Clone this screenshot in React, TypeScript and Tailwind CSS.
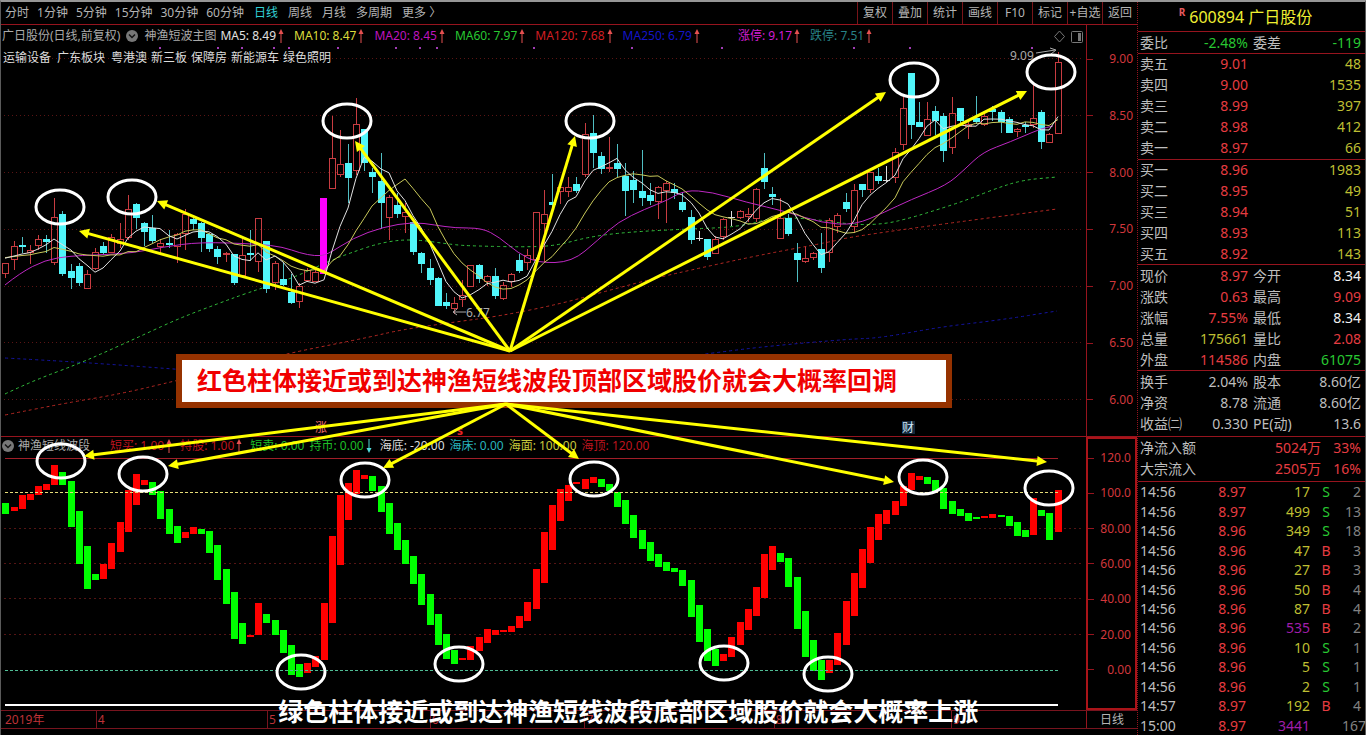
import clsx from "clsx";

type Kind = "u" | "d" | "w";
type Point = [number, number];

const FONT = "font-['Noto_Sans','Noto_Sans_CJK_SC',sans-serif]";

const MINUTES = ["分时", "1分钟", "5分钟", "15分钟", "30分钟", "60分钟"];
const PERIODS = ["日线", "周线", "月线", "多周期", "更多 〉"];
const TOOLS = ["复权", "叠加", "统计", "画线", "F10", "标记", "+自选", "返回"];

// kind, high, body top, body bottom, low
const CANDLES: [Kind, number, number, number, number][] = [
    ["u", 263, 263, 274, 278], ["u", 241, 246, 260, 270], ["d", 237, 245, 247, 253], ["u", 245, 250, 253, 264],
    ["u", 235, 239, 246, 250], ["d", 235, 239, 242, 253], ["u", 198, 217, 263, 265], ["d", 211, 214, 274, 276],
    ["d", 264, 271, 278, 289], ["d", 263, 266, 283, 286], ["u", 270, 274, 289, 289], ["u", 248, 252, 269, 270],
    ["d", 242, 246, 253, 255], ["u", 234, 237, 253, 253], ["u", 223, 239, 244, 248], ["u", 195, 209, 238, 240],
    ["d", 203, 204, 218, 229], ["d", 222, 223, 232, 246], ["d", 215, 228, 241, 243], ["u", 239, 243, 247, 253],
    ["d", 230, 243, 245, 248], ["u", 233, 234, 247, 263], ["u", 209, 214, 234, 250], ["d", 215, 219, 224, 230],
    ["d", 222, 223, 238, 252], ["d", 233, 234, 249, 252], ["d", 246, 249, 257, 264], ["u", 252, 253, 255, 262],
    ["d", 254, 254, 283, 285], ["u", 238, 255, 276, 276], ["d", 230, 253, 255, 261], ["u", 218, 218, 262, 272],
    ["d", 241, 241, 289, 293], ["u", 261, 263, 283, 290], ["d", 263, 279, 285, 286], ["d", 274, 292, 303, 304],
    ["u", 283, 286, 302, 308], ["u", 268, 270, 281, 281], ["u", 270, 272, 282, 282], ["u", 262, 268, 276, 278],
    ["u", 116, 158, 189, 189], ["u", 130, 164, 175, 177], ["d", 144, 163, 178, 203], ["u", 98, 124, 171, 175],
    ["d", 129, 129, 163, 171], ["d", 168, 172, 177, 193], ["d", 153, 181, 203, 229], ["u", 195, 197, 218, 240],
    ["d", 193, 205, 214, 218], ["u", 203, 212, 217, 233], ["d", 220, 222, 252, 255], ["d", 252, 253, 264, 273],
    ["d", 259, 268, 280, 285], ["d", 277, 278, 306, 306], ["d", 293, 302, 306, 309], ["u", 297, 303, 309, 314],
    ["u", 280, 295, 300, 307], ["u", 265, 265, 287, 287], ["d", 264, 265, 279, 283], ["u", 275, 276, 282, 286],
    ["d", 268, 276, 296, 299], ["u", 282, 285, 299, 300], ["u", 273, 274, 282, 287], ["d", 254, 260, 271, 273],
    ["u", 249, 255, 263, 270], ["u", 212, 212, 260, 260], ["u", 190, 214, 224, 262], ["d", 174, 202, 205, 213],
    ["u", 182, 187, 192, 204], ["u", 177, 187, 192, 197], ["d", 177, 184, 191, 193], ["u", 123, 134, 175, 177],
    ["d", 115, 133, 153, 168], ["d", 152, 156, 169, 174], ["u", 137, 167, 169, 172], ["d", 144, 163, 169, 177],
    ["d", 163, 176, 191, 216], ["d", 171, 180, 190, 203], ["d", 150, 191, 198, 206], ["d", 183, 195, 201, 205],
    ["u", 186, 187, 202, 219], ["u", 181, 183, 191, 223], ["d", 183, 189, 193, 199], ["d", 192, 202, 210, 212],
    ["d", 210, 217, 240, 244], ["w", 231, 238, 239, 241], ["d", 239, 239, 257, 260], ["u", 236, 239, 254, 254],
    ["u", 218, 219, 237, 240], ["w", 211, 217, 218, 226], ["u", 210, 211, 218, 219], ["u", 208, 214, 217, 222],
    ["u", 188, 189, 219, 222], ["d", 153, 168, 182, 189], ["d", 187, 194, 197, 205], ["u", 198, 218, 239, 239],
    ["d", 214, 218, 234, 236], ["d", 243, 253, 260, 282], ["u", 247, 258, 262, 263], ["u", 252, 253, 258, 260],
    ["d", 233, 249, 268, 273], ["u", 218, 220, 253, 262], ["u", 213, 215, 227, 233], ["d", 193, 202, 209, 212],
    ["u", 184, 190, 227, 233], ["d", 184, 184, 190, 197], ["u", 172, 172, 190, 193], ["d", 168, 176, 181, 184],
    ["w", 166, 180, 181, 182], ["u", 148, 152, 178, 183], ["u", 97, 108, 145, 150], ["d", 73, 73, 125, 139],
    ["d", 102, 122, 127, 127], ["u", 102, 119, 136, 136], ["d", 106, 111, 121, 135], ["d", 113, 116, 151, 162],
    ["u", 97, 113, 148, 154], ["d", 108, 108, 121, 124], ["u", 120, 124, 127, 139], ["d", 96, 118, 122, 124],
    ["u", 113, 116, 125, 126], ["d", 106, 109, 112, 121], ["d", 110, 112, 122, 133], ["d", 117, 119, 133, 133],
    ["u", 128, 129, 132, 137], ["d", 122, 125, 127, 133], ["u", 85, 118, 125, 128], ["d", 110, 112, 142, 149],
    ["u", 133, 134, 143, 143], ["u", 52, 62, 134, 134],
];

// kind, top, bottom
const WAVE: [Kind, number, number][] = [
    ["d", 503, 514], ["u", 507, 511], ["u", 495, 509], ["u", 494, 500], ["u", 486, 495], ["u", 484, 490],
    ["u", 465, 485], ["d", 472, 485], ["d", 481, 527], ["d", 511, 564], ["d", 546, 589], ["d", 574, 580],
    ["u", 564, 579], ["u", 543, 569], ["u", 522, 552], ["u", 490, 532], ["u", 474, 505], ["u", 480, 485],
    ["d", 482, 495], ["d", 491, 519], ["d", 509, 534], ["d", 526, 543], ["u", 532, 538], ["u", 527, 534],
    ["d", 529, 534], ["d", 531, 553], ["d", 545, 580], ["d", 569, 604], ["d", 592, 639], ["d", 623, 644],
    ["u", 635, 637], ["u", 603, 635], ["d", 614, 623], ["d", 620, 635], ["d", 630, 653], ["d", 645, 675],
    ["d", 664, 677], ["u", 663, 673], ["u", 656, 667], ["u", 603, 660], ["u", 536, 623], ["u", 495, 565],
    ["u", 483, 520], ["u", 470, 494], ["u", 475, 479], ["d", 476, 491], ["d", 486, 512], ["d", 503, 534],
    ["d", 523, 550], ["d", 540, 564], ["d", 556, 584], ["d", 574, 605], ["d", 594, 625], ["d", 614, 645],
    ["d", 634, 659], ["d", 650, 664], ["u", 658, 660], ["u", 646, 660], ["u", 637, 651], ["u", 629, 643],
    ["u", 630, 635], ["u", 630, 632], ["u", 626, 632], ["u", 616, 628], ["u", 602, 621], ["u", 569, 609],
    ["u", 532, 583], ["u", 505, 550], ["u", 489, 521], ["u", 485, 501], ["u", 482, 484], ["u", 479, 489],
    ["u", 477, 483], ["d", 479, 487], ["d", 484, 491], ["d", 492, 507], ["d", 500, 524], ["d", 515, 538],
    ["d", 530, 549], ["d", 542, 561], ["d", 554, 567], ["d", 562, 571], ["d", 568, 572], ["d", 570, 586],
    ["d", 580, 617], ["d", 605, 642], ["d", 629, 661], ["d", 649, 666], ["u", 654, 661], ["u", 637, 657],
    ["u", 622, 645], ["u", 609, 630], ["u", 587, 616], ["u", 554, 598], ["u", 546, 570], ["d", 553, 562],
    ["d", 558, 587], ["d", 577, 629], ["d", 611, 657], ["d", 640, 671], ["d", 660, 680], ["u", 660, 673],
    ["u", 633, 665], ["u", 601, 645], ["u", 573, 616], ["u", 549, 588], ["u", 527, 563], ["u", 514, 540],
    ["u", 510, 524], ["u", 501, 515], ["u", 486, 506], ["u", 473, 490], ["u", 476, 480], ["d", 477, 484],
    ["d", 480, 491], ["d", 488, 509], ["d", 501, 514], ["d", 509, 516], ["d", 513, 521], ["d", 517, 519],
    ["u", 516, 518], ["u", 514, 518], ["d", 515, 517], ["d", 516, 526], ["d", 522, 536], ["d", 530, 537],
    ["u", 498, 535], ["d", 510, 516], ["d", 513, 540], ["u", 490, 532],
];

const MA20: Point[] = [
    [5, 285], [20, 273], [45, 260], [70, 256], [95, 255], [133, 253], [163, 247], [200, 242], [258, 244], [283, 247],
    [300, 253], [315, 256], [327, 255], [353, 238], [383, 227], [413, 222], [435, 225], [455, 228], [482, 228],
    [499, 237], [518, 253], [538, 263], [572, 262], [598, 240], [618, 222], [645, 209], [668, 200], [685, 190],
    [712, 192], [745, 202], [788, 212], [822, 223], [855, 225], [885, 212], [910, 200], [947, 185], [965, 169],
    [983, 152], [1010, 142], [1040, 129], [1053, 126],
];
const MA60: Point[] = [
    [5, 394], [30, 382], [78, 364], [110, 350], [143, 335], [180, 318], [217, 304], [247, 293], [293, 278], [327, 262],
    [350, 253], [383, 242], [413, 239], [455, 245], [475, 246], [522, 247], [555, 246], [588, 237], [628, 232],
    [688, 229], [738, 227], [772, 218], [805, 218], [855, 225], [885, 224], [910, 218], [930, 212], [967, 200],
    [997, 188], [1023, 180], [1057, 177],
];
const MA120: Point[] = [
    [5, 415], [60, 404], [120, 394], [175, 381], [290, 353], [330, 345], [370, 337], [400, 330], [455, 322],
    [500, 316], [560, 304], [610, 290], [660, 277], [700, 268], [760, 255], [830, 242], [850, 237], [950, 223],
    [1057, 209],
];
const MA250: Point[] = [
    [5, 358], [60, 361], [120, 365], [200, 371], [300, 377], [450, 379], [600, 368], [720, 352], [770, 346],
    [850, 339], [880, 338], [940, 327], [1000, 320], [1057, 311],
];

const SIGNAL_DOTS = [160, 218, 242, 274, 289, 338, 396, 420, 437, 534, 632, 722, 854, 910, 1032];

const RINGS: Point[] = [
    [60, 207], [132, 197], [347, 121], [590, 121], [914, 80], [1051, 72],
    [61, 461], [143, 474], [365, 480], [594, 479], [923, 477], [1049, 488],
    [301, 672], [459, 664], [724, 663], [828, 674],
];
const UPPER_TARGETS: Point[] = [[79, 231], [157, 201], [355, 141], [575, 136], [886, 92], [1027, 91]];
const LOWER_TARGETS: Point[] = [[84, 456], [168, 466], [383, 468], [579, 459], [894, 482], [1047, 462]];

const MAIN_LEGEND = [
    { text: "MA5: 8.49", color: "text-[#e0e0e0]" },
    { text: "MA10: 8.47", color: "text-[#dcdc3c]" },
    { text: "MA20: 8.45", color: "text-[#be14be]" },
    { text: "MA60: 7.97", color: "text-[#28c832]" },
    { text: "MA120: 7.68", color: "text-[#d21e23]" },
    { text: "MA250: 6.79", color: "text-[#1414c8]" },
    { text: "涨停: 9.17", color: "text-[#d21ed2]", push: true },
    { text: "跌停: 7.51", color: "text-[#288287]" },
];

const SUB_LEGEND = [
    { text: "短买: 1.00", color: "text-[#be141e]", arrow: "up" },
    { text: "持股: 1.00", color: "text-[#be141e]", arrow: "up" },
    { text: "短卖: 0.00", color: "text-[#1ebe28]" },
    { text: "持币: 0.00", color: "text-[#1ebe28]", arrow: "down" },
    { text: "海底: -20.00", color: "text-[#dcdcdc]" },
    { text: "海床: 0.00", color: "text-[#28b4be]" },
    { text: "海面: 100.00", color: "text-[#c8c83c]" },
    { text: "海顶: 120.00", color: "text-[#be141e]" },
];

const PRICE_SCALE = ["9.00", "8.50", "8.00", "7.50", "7.00", "6.50", "6.00"];
const WAVE_SCALE = ["120.0", "100.0", "80.00", "60.00", "40.00", "20.00", "0.00"];

const MONTHS = [
    { label: "2019年", span: 92 },
    { label: "4", span: 172 },
    { label: "5", span: 163 },
    { label: "6", span: 155 },
    { label: "7", span: 190 },
    { label: "8", span: 178 },
    { label: "9", span: 135 },
];

const ASKS = [["卖五", "9.01", "48"], ["卖四", "9.00", "1535"], ["卖三", "8.99", "397"], ["卖二", "8.98", "412"], ["卖一", "8.97", "66"]];
const BIDS = [["买一", "8.96", "1983"], ["买二", "8.95", "49"], ["买三", "8.94", "51"], ["买四", "8.93", "113"], ["买五", "8.92", "143"]];

const RED = "text-[#e63c41]";
const GREEN = "text-[#28c832]";
const YELLOW = "text-[#bebe32]";
const WHITE = "text-[#f0f0f0]";
const GRAY = "text-[#bebebe]";

const QUOTE = [
    ["现价", "8.97", RED, "今开", "8.34", WHITE],
    ["涨跌", "0.63", RED, "最高", "9.09", RED],
    ["涨幅", "7.55%", RED, "最低", "8.34", WHITE],
    ["总量", "175661", YELLOW, "量比", "2.08", RED],
    ["外盘", "114586", RED, "内盘", "61075", GREEN],
];
const FUNDAMENTALS = [
    ["换手", "2.04%", GRAY, "股本", "8.60亿", GRAY],
    ["净资", "8.78", GRAY, "流通", "8.60亿", GRAY],
    ["收益㈡", "0.330", GRAY, "PE(动)", "13.6", GRAY],
];
const FLOWS = [["净流入额", "5024万", "33%"], ["大宗流入", "2505万", "16%"]];
const TICKS = [
    ["14:56", "8.97", "17", "S", "2"],
    ["14:56", "8.97", "499", "S", "13"],
    ["14:56", "8.96", "349", "S", "18"],
    ["14:56", "8.96", "47", "B", "3"],
    ["14:56", "8.96", "27", "B", "3"],
    ["14:56", "8.96", "50", "B", "4"],
    ["14:56", "8.96", "87", "B", "4"],
    ["14:56", "8.96", "535", "B", "2"],
    ["14:56", "8.96", "10", "S", "1"],
    ["14:56", "8.96", "5", "S", "1"],
    ["14:56", "8.96", "2", "S", "1"],
    ["14:57", "8.97", "192", "B", "4"],
    ["15:00", "8.97", "3441", "", "167"],
];

const barX = (i: number) => Math.round(5.4 + i * 8.157);
const toPath = (points: Point[]) => points.map(([x, y], i) => `${i ? "L" : "M"}${x} ${y.toFixed(1)}`).join("");

// quadratic midpoints keep the long averages smooth
function toCurve(points: Point[]) {
    let d = `M${points[0][0]} ${points[0][1]}`;
    for (let i = 1; i < points.length - 1; i++) {
        const [x, y] = points[i];
        const [nx, ny] = points[i + 1];
        d += `Q${x} ${y} ${(x + nx) / 2} ${(y + ny) / 2}`;
    }
    const last = points[points.length - 1];
    return `${d}L${last[0]} ${last[1]}`;
}

function movingAverage(size: number): Point[] {
    const closes = CANDLES.map(([kind, , top, bottom]) => (kind === "u" ? top : bottom));
    return closes.map((_, i) => {
        let sum = 0;
        for (let k = i - size + 1; k <= i; k++) sum += k < 0 ? 257 : closes[k];
        return [barX(i), sum / size];
    });
}

function Trend({ down }: { down?: boolean }) {
    return (
        <svg viewBox="0 0 8 16" className={clsx("w-2 h-4 shrink-0", down && "rotate-180")} aria-hidden="true">
            <path d="M4 15V3" stroke={down ? "#50dcdc" : "#e65050"} strokeWidth="1" />
            <path d="M4 1L6.5 6H1.5Z" fill={down ? "#50dcdc" : "#e65050"} />
        </svg>
    );
}

function Toggle({ label }: { label: string }) {
    return (
        <button type="button" aria-label={label} className="shrink-0">
            <svg viewBox="0 0 12 12" className="w-3 h-3">
                <circle cx="6" cy="6" r="6" fill="#787878" />
                <path d="M3 4.5L6 7.5L9 4.5" fill="none" stroke="#141414" strokeWidth="1.5" />
            </svg>
        </button>
    );
}

function Toolbar() {
    return (
        <nav className="flex h-[23px] items-stretch border-b border-[#96141e] text-xs text-[#b4b4b4]">
            <div className="flex items-center gap-2 pl-1">
                {MINUTES.map((label) => (
                    <button key={label} type="button" className="whitespace-nowrap">{label}</button>
                ))}
            </div>
            <div className="flex items-center gap-2.5 pl-2.5">
                {PERIODS.map((label) => (
                    <button
                        key={label}
                        type="button"
                        className={clsx("whitespace-nowrap", label === "日线" && "text-[#32d2d7]")}
                    >
                        {label}
                    </button>
                ))}
            </div>
            <div className="ml-auto flex">
                {TOOLS.map((label) => (
                    <button key={label} type="button" className="w-[35px] whitespace-nowrap border-l border-[#781419]">
                        {label}
                    </button>
                ))}
            </div>
        </nav>
    );
}

function CandleChart() {
    return (
        <svg viewBox="1 25 1085 411" className="block w-full" role="img" aria-label="日线K线图">
            {[59, 116, 173, 230, 287, 343, 400].map((y) => (
                <path key={y} d={`M4 ${y - 0.5}H1083`} stroke="#5a1414" strokeDasharray="1 3" />
            ))}
            {SIGNAL_DOTS.map((x) => (
                <rect key={x} x={x - 1} y="47" width="2" height="2" fill="#a03cb4" />
            ))}
            <g fill="none">
                <path d={toCurve(MA250)} stroke="#1414a0" strokeDasharray="3 3" />
                <path d={toCurve(MA120)} stroke="#b42823" strokeDasharray="3 3" />
                <path d={toCurve(MA60)} stroke="#32be3c" strokeDasharray="3 3" />
            </g>
            <g shapeRendering="crispEdges">
                {CANDLES.map(([kind, high, top, bottom, low], i) => {
                    const x = barX(i);
                    if (i === 39) return <rect key={i} x={x - 4} y="198" width="7" height="76" fill="#ff00ff" />;
                    if (kind === "u") {
                        return (
                            <path
                                key={i}
                                d={`M${x + 0.5} ${high}V${top}M${x + 0.5} ${bottom}V${low}M${x - 2.5} ${top + 0.5}h6V${bottom - 0.5}h-6Z`}
                                fill="none"
                                stroke="#c83c41"
                            />
                        );
                    }
                    return (
                        <g key={i} fill={kind === "d" ? "#50f5fa" : "#dcdcdc"}>
                            <rect x={x} y={high} width="1" height={low - high} fill={kind === "d" ? "#50bec3" : "#dcdcdc"} />
                            <rect x={x - 3} y={top} width="7" height={bottom - top} />
                        </g>
                    );
                })}
            </g>
            <g fill="none">
                <path d={toCurve(MA20)} stroke="#be28c3" />
                <path d={toPath(movingAverage(10))} stroke="#c8c85a" />
                <path d={toPath(movingAverage(5))} stroke="#e1e1e1" />
            </g>
            <g fill="#aaaaaa" fontSize="12">
                <text x="1010" y="60">9.09</text>
                <path d="M1036 53L1055 50M1050 48L1056 50L1051 54" fill="none" stroke="#aaaaaa" />
                <text x="466" y="317">6.77</text>
                <path d="M453 312H466M457 309L453 312L457 315" fill="none" stroke="#aaaaaa" />
            </g>
            <g fontSize="12" textAnchor="middle">
                <text x="321" y="432" fill="#f06e6e">涨</text>
                <text x="460" y="435" fill="#e62323" fontWeight="bold">s</text>
                <rect x="902" y="421" width="13" height="13" fill="#14283c" />
                <text x="908" y="432" fill="#d2e6fa">财</text>
            </g>
        </svg>
    );
}

function WaveChart() {
    return (
        <svg viewBox="1 437 1085 273" className="block w-full" role="img" aria-label="神渔短线波段">
            {[529, 564, 599, 635].map((y) => (
                <path key={y} d={`M4 ${y - 0.5}H1083`} stroke="#551414" strokeDasharray="2 3" />
            ))}
            <path d="M5 458.5H1058" stroke="#a01e28" />
            <g shapeRendering="crispEdges">
                {WAVE.map(([kind, top, bottom], i) => (
                    <rect
                        key={i}
                        x={barX(i) - 3}
                        y={top}
                        width="7"
                        height={bottom - top}
                        fill={kind === "u" ? "#ff0000" : "#00ff00"}
                    />
                ))}
            </g>
            <path d="M5 492.5H1058" stroke="#e6dc78" strokeDasharray="3 2" />
            <path d="M5 670.5H1058" stroke="#50be96" strokeDasharray="3 2" />
            <path d="M5 705H1058" stroke="#ffffff" strokeWidth="2" />
        </svg>
    );
}

function MainLegend() {
    return (
        <div className="absolute inset-x-0 top-0 text-xs text-[#aaaaaa]">
            <div className="flex h-[21px] items-center whitespace-nowrap pl-px">
                <span>广日股份(日线,前复权)</span>
                <span className="flex px-1.5"><Toggle label="切换主图指标" /></span>
                <span>神渔短波主图</span>
                <div className="flex gap-[9px] pl-1">
                    {MAIN_LEGEND.map(({ text, color, push }) => (
                        <span key={text} className={clsx("flex items-center gap-px", color, push && "ml-7")}>
                            {text}
                            <Trend />
                        </span>
                    ))}
                </div>
                <svg viewBox="0 0 30 14" className="ml-auto mr-0.5 h-3.5 w-[30px]" fill="none" stroke="#787878" aria-hidden="true">
                    <path d="M5.5 2L10.5 7.5L5.5 13L0.5 7.5Z" />
                    <rect x="17.5" y="2.5" width="11" height="11" rx="1" />
                    <rect x="24" y="4" width="3" height="8" fill="#787878" stroke="none" />
                </svg>
            </div>
            <div className="mt-[3px] flex h-[18px] items-center gap-1 whitespace-nowrap pl-0.5 text-[#dcdcdc]">
                <span className="pr-0.5">运输设备</span>
                <span className="pr-0.5">广东板块</span>
                <span>粤港澳</span>
                <span>新三板</span>
                <span>保障房</span>
                <span>新能源车</span>
                <span>绿色照明</span>
            </div>
        </div>
    );
}

function SubLegend() {
    return (
        <div className="absolute inset-x-0 top-0 flex h-[17px] items-center whitespace-nowrap pl-px text-xs text-[#aaaaaa]">
            <Toggle label="切换副图指标" />
            <span className="pl-1">神渔短线波段</span>
            <div className="flex gap-[5px] pl-5">
                {SUB_LEGEND.map(({ text, color, arrow }) => (
                    <span key={text} className={clsx("flex items-center gap-px", color, arrow && "pr-0.5")}>
                        {text}
                        {arrow && <Trend down={arrow === "down"} />}
                    </span>
                ))}
            </div>
        </div>
    );
}

function Scale({ label }: { label: string }) {
    return (
        <div className="flex items-center justify-between pr-1">
            <span className="h-px w-1.5 bg-[#96141e]"></span>
            {label}
        </div>
    );
}

function Arrow({ from, to }: { from: Point; to: Point }) {
    const dx = to[0] - from[0];
    const dy = to[1] - from[1];
    const length = Math.hypot(dx, dy);
    const angle = (Math.atan2(dy, dx) * 180) / Math.PI;
    return (
        <g transform={`translate(${from[0]} ${from[1]}) rotate(${angle})`}>
            <path d={`M0 0H${length - 8}`} stroke="#ffff00" strokeWidth="3" />
            <path d={`M${length} 0l-10 -5v10Z`} fill="#ffff00" />
        </g>
    );
}

function Annotations() {
    return (
        <>
            <svg viewBox="1 2 1136 727" className="pointer-events-none absolute inset-x-0 top-0 w-full" aria-hidden="true">
                {RINGS.map(([cx, cy]) => (
                    <ellipse key={`${cx}-${cy}`} cx={cx} cy={cy} rx="24" ry="17" fill="none" stroke="#ffffff" strokeWidth="3" />
                ))}
                {UPPER_TARGETS.map((to) => <Arrow key={to.join()} from={[510, 351]} to={to} />)}
            </svg>
            <p className="absolute left-[15.4%] top-[352px] flex h-[54px] w-[776px] items-center whitespace-nowrap border-6 border-[#963200] bg-white pl-[15px] text-[25px] font-bold text-[#f00000]">
                红色柱体接近或到达神渔短线波段顶部区域股价就会大概率回调
            </p>
            <svg viewBox="1 2 1136 727" className="pointer-events-none absolute inset-x-0 top-0 w-full" aria-hidden="true">
                {LOWER_TARGETS.map((to) => <Arrow key={to.join()} from={[506, 404]} to={to} />)}
            </svg>
            <p className="absolute bottom-0 left-[24.4%] whitespace-nowrap text-[25px] font-bold leading-9 text-white">
                绿色柱体接近或到达神渔短线波段底部区域股价就会大概率上涨
            </p>
        </>
    );
}

function PairTable({ rows }: { rows: string[][] }) {
    return (
        <table className="w-full table-fixed">
            <tbody>
                {rows.map(([name, value, color, name2, value2, color2]) => (
                    <tr key={name} className="h-[21px]">
                        <th className="w-[46px] whitespace-nowrap pl-0.5 text-left font-normal">{name}</th>
                        <td className={clsx("w-16 text-right", color)}>{value}</td>
                        <th className="w-[50px] whitespace-nowrap pl-[5px] text-left font-normal">{name2}</th>
                        <td className={clsx("pr-1 text-right", color2)}>{value2}</td>
                    </tr>
                ))}
            </tbody>
        </table>
    );
}

function BookTable({ rows }: { rows: string[][] }) {
    return (
        <table className="w-full table-fixed border-t border-[#96141e]">
            <tbody>
                {rows.map(([name, price, volume]) => (
                    <tr key={name} className="h-[21px]">
                        <th className="w-[46px] pl-0.5 text-left font-normal">{name}</th>
                        <td className={clsx("w-16 text-right", RED)}>{price}</td>
                        <td className={clsx("pr-1 text-right", YELLOW)}>{volume}</td>
                    </tr>
                ))}
            </tbody>
        </table>
    );
}

function QuotePanel() {
    return (
        <aside className="flex w-[228px] shrink-0 flex-col border-l border-dotted border-[#96141e] text-sm leading-5 text-[#bebebe]">
            <h1 className="flex h-[29px] shrink-0 items-center justify-center pr-3 text-base text-[#f0f032]">
                <sup className="pr-1 text-[10px] font-bold text-[#e65a5f]">R</sup>
                600894 广日股份
            </h1>
            <div className="border-t border-[#96141e]">
                <PairTable rows={[["委比", "-2.48%", GREEN, "委差", "-119", GREEN]]} />
            </div>
            <BookTable rows={ASKS} />
            <BookTable rows={BIDS} />
            <div className="border-t border-[#96141e]">
                <PairTable rows={QUOTE} />
            </div>
            <div className="border-t border-[#96141e] pb-0.5">
                <PairTable rows={FUNDAMENTALS} />
            </div>
            <div className="border-t border-[#96141e] pb-0.5">
                <table className={clsx("w-full", RED)}>
                    <tbody>
                        {FLOWS.map(([name, amount, share]) => (
                            <tr key={name} className="h-[21px]">
                                <th className={clsx("pl-0.5 text-left font-normal", GRAY)}>{name}</th>
                                <td className="text-right">{amount}</td>
                                <td className="w-11 pr-1 text-right">{share}</td>
                            </tr>
                        ))}
                    </tbody>
                </table>
            </div>
            <table className="h-[254px] w-full shrink-0 table-fixed border-t border-[#96141e] leading-[19px]">
                <tbody>
                    {TICKS.map(([time, price, volume, side, count], i) => (
                        <tr key={i}>
                            <td className="w-[46px] pl-0.5">{time}</td>
                            <td className={clsx("w-[62px] text-right", RED)}>{price}</td>
                            <td className={clsx("w-16 text-right", volume === "535" || volume === "3441" ? "text-[#a01eaa]" : YELLOW)}>
                                {volume}
                            </td>
                            <td className={clsx("w-8 text-center", side === "S" ? GREEN : RED)}>{side}</td>
                            <td className="pr-1 text-right text-[#828282]">{count}</td>
                        </tr>
                    ))}
                </tbody>
            </table>
        </aside>
    );
}

export default function App() {
    return (
        <div className={clsx("flex min-h-screen items-start border-x border-t-2 border-x-[#5a5a5a] border-t-[#969696] bg-black", FONT)}>
            <main className="relative min-w-0 flex-1">
                <Toolbar />
                <section className="flex">
                    <div className="relative min-w-0 flex-1">
                        <CandleChart />
                        <MainLegend />
                    </div>
                    <div className="flex w-[51px] shrink-0 flex-col border-l border-[#96141e] pb-[26px] pt-[24px] text-xs leading-5 text-[#d2373c]">
                        <div className="flex flex-1 flex-col justify-between">
                            {PRICE_SCALE.map((label) => <Scale key={label} label={label} />)}
                        </div>
                    </div>
                </section>
                <section className="flex border-t border-[#96141e]">
                    <div className="relative min-w-0 flex-1">
                        <WaveChart />
                        <SubLegend />
                    </div>
                    <div className="flex w-[51px] shrink-0 flex-col justify-between border-2 border-[#aa1419] pb-7 pt-[9px] text-xs leading-5 text-[#d2373c]">
                        {WAVE_SCALE.map((label) => <Scale key={label} label={label} />)}
                    </div>
                </section>
                <div className="flex border-y border-[#78141e] text-xs leading-[17px] text-[#be3237]">
                    <div className="flex min-w-0 flex-1">
                        {MONTHS.map(({ label, span }, i) => (
                            <span
                                key={label}
                                style={{ flexGrow: span, flexBasis: 0 }}
                                className={clsx(i ? "border-l border-[#78141e] pl-px" : "pl-1")}
                            >
                                {label}
                            </span>
                        ))}
                    </div>
                    <span className="w-[51px] shrink-0 border-l border-[#96141e] text-center text-[#b4b4b4]">日线</span>
                </div>
                <Annotations />
            </main>
            <QuotePanel />
        </div>
    );
}
